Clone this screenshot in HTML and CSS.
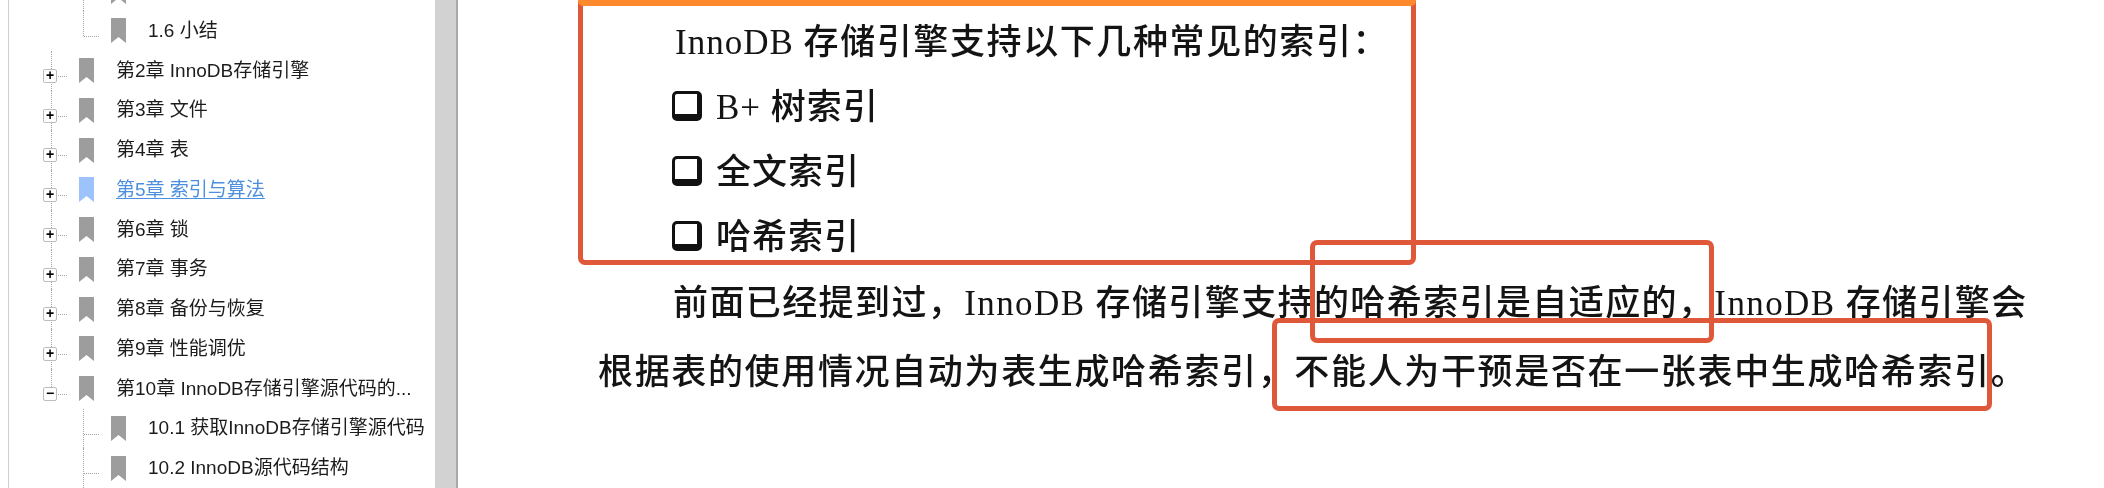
FILE: index.html
```html
<!DOCTYPE html>
<html lang="zh-CN">
<head>
<meta charset="utf-8">
<title>InnoDB 索引</title>
<link rel="stylesheet" href="styles.css">
</head>
<body>
<div class="app">
  <aside class="sidebar">
    <ul class="tree">
      <li class="row sub sub-line"><svg class="mark" viewBox="0 0 15 25"><path d="M0 0H15V25L7.5 19L0 25Z"/></svg><span class="label">1.5 各存储引擎之间的比较</span></li>
      <li class="row sub sub-line sub-end"><svg class="mark" viewBox="0 0 15 25"><path d="M0 0H15V25L7.5 19L0 25Z"/></svg><span class="label">1.6 小结</span></li>
      <li class="row top"><span class="toggle">+</span><svg class="mark" viewBox="0 0 15 25"><path d="M0 0H15V25L7.5 19L0 25Z"/></svg><span class="label">第2章 InnoDB存储引擎</span></li>
      <li class="row top"><span class="toggle">+</span><svg class="mark" viewBox="0 0 15 25"><path d="M0 0H15V25L7.5 19L0 25Z"/></svg><span class="label">第3章 文件</span></li>
      <li class="row top"><span class="toggle">+</span><svg class="mark" viewBox="0 0 15 25"><path d="M0 0H15V25L7.5 19L0 25Z"/></svg><span class="label">第4章 表</span></li>
      <li class="row top active"><span class="toggle">+</span><svg class="mark" viewBox="0 0 15 25"><path d="M0 0H15V25L7.5 19L0 25Z"/></svg><span class="label">第5章 索引与算法</span></li>
      <li class="row top"><span class="toggle">+</span><svg class="mark" viewBox="0 0 15 25"><path d="M0 0H15V25L7.5 19L0 25Z"/></svg><span class="label">第6章 锁</span></li>
      <li class="row top"><span class="toggle">+</span><svg class="mark" viewBox="0 0 15 25"><path d="M0 0H15V25L7.5 19L0 25Z"/></svg><span class="label">第7章 事务</span></li>
      <li class="row top"><span class="toggle">+</span><svg class="mark" viewBox="0 0 15 25"><path d="M0 0H15V25L7.5 19L0 25Z"/></svg><span class="label">第8章 备份与恢复</span></li>
      <li class="row top"><span class="toggle">+</span><svg class="mark" viewBox="0 0 15 25"><path d="M0 0H15V25L7.5 19L0 25Z"/></svg><span class="label">第9章 性能调优</span></li>
      <li class="row top top-end"><span class="toggle">&minus;</span><svg class="mark" viewBox="0 0 15 25"><path d="M0 0H15V25L7.5 19L0 25Z"/></svg><span class="label">第10章 InnoDB存储引擎源代码的...</span></li>
      <li class="row sub sub-line"><svg class="mark" viewBox="0 0 15 25"><path d="M0 0H15V25L7.5 19L0 25Z"/></svg><span class="label">10.1 获取InnoDB存储引擎源代码</span></li>
      <li class="row sub sub-line"><svg class="mark" viewBox="0 0 15 25"><path d="M0 0H15V25L7.5 19L0 25Z"/></svg><span class="label">10.2 InnoDB源代码结构</span></li>
    </ul>
  </aside>
  <div class="gutter"></div>
  <main class="page">
    <p class="line intro"><span class="latin">InnoDB </span>存储引擎支持以下几种常见的索引：</p>
    <p class="line item"><span class="check"></span>B+ 树索引</p>
    <p class="line item"><span class="check"></span>全文索引</p>
    <p class="line item"><span class="check"></span>哈希索引</p>
    <p class="line para-first">前面已经提到过，InnoDB 存储引擎支持的哈希索引是自适应的，InnoDB 存储引擎会</p>
    <p class="line para-last">根据表的使用情况自动为表生成哈希索引，不能人为干预是否在一张表中生成哈希索引。</p>
    <div class="note note-a"></div>
    <div class="note note-b"></div>
    <div class="note note-c"></div>
  </main>
</div>
</body>
</html>
```

FILE: styles.css
```css
* { box-sizing: border-box; }
html, body { margin: 0; height: 100%; background: #fff; overflow: hidden; }
.app { display: flex; height: 488px; width: 2104px; }

.sidebar {
  width: 427px;
  flex: none;
  margin-left: 8px;
  border-left: 1px solid #cfcfcf;
  overflow: hidden;
  background: #fff;
}
.tree {
  list-style: none;
  margin: -28.75px 0 0;
  padding: 0;
  font: 19px/24px "Liberation Sans", "Noto Sans CJK SC", sans-serif;
  color: #1c1c1c;
  filter: blur(0.25px);
}
.row {
  position: relative;
  display: flex;
  align-items: center;
  height: 39.75px;
  white-space: nowrap;
}
.top { padding-left: 70px; }
.sub { padding-left: 102px; }
.mark { width: 15px; height: 25px; flex: none; fill: #9d9d9d; }
.label { margin-left: 22px; }
.active .mark { fill: #9cc3fb; }
.active .label { color: #4c8fdf; text-decoration: underline; text-underline-offset: 2px; }

.top::before {
  content: "";
  position: absolute;
  left: 42px;
  top: 0;
  bottom: 0;
  border-left: 1px dotted #a3a3a3;
}
.top-end::before { bottom: 50%; }
.top::after {
  content: "";
  position: absolute;
  left: 49px;
  top: 25px;
  width: 9px;
  border-top: 1px dotted #a3a3a3;
}
.toggle {
  position: absolute;
  z-index: 1;
  left: 34px;
  top: 18px;
  width: 14px;
  height: 14px;
  border: 1px solid #bdbdbd;
  border-radius: 2px;
  background: #fff;
  color: #000;
  font: 700 14px/11px "Liberation Sans", sans-serif;
  text-align: center;
}
.sub-line::before {
  content: "";
  position: absolute;
  left: 74px;
  top: 0;
  bottom: 0;
  border-left: 1px dotted #a3a3a3;
}
.sub-end::before { bottom: 14.5px; }
.sub-line::after {
  content: "";
  position: absolute;
  left: 75px;
  top: 25px;
  width: 15px;
  border-top: 1px dotted #a3a3a3;
}

.gutter {
  width: 23px;
  flex: none;
  background: #d2d2d2;
  border-right: 2px solid #a9a9a9;
}
.page {
  position: relative;
  flex: 1;
  padding-top: 18px;
  font-family: "Liberation Serif", "Noto Sans CJK SC", serif;
  font-size: 35px;
  font-weight: 500;
  color: #141414;
}
.line {
  margin: 0;
  height: 65px;
  line-height: 50px;
  white-space: nowrap;
  filter: blur(0.45px);
}
.intro { padding-left: 217px; letter-spacing: 1.6px; }
.latin { letter-spacing: 1px; }
.item { display: flex; align-items: flex-start; padding-left: 214px; letter-spacing: 1px; }
.check {
  flex: none;
  width: 30px;
  height: 30px;
  margin: 8px 14px 0 0;
  border: 3px solid #111;
  border-right-width: 5px;
  border-bottom-width: 7px;
  border-radius: 5px;
}
.para-first { padding-left: 215px; letter-spacing: 1.4px; margin-top: 1px; }
.para-last { padding-left: 140px; letter-spacing: 1.65px; margin-top: 4px; }

.note {
  position: absolute;
  border: 5px solid #e0583a;
  border-radius: 7px;
}
.note-a { left: 120px; top: -8px; width: 838px; height: 273px; }
.note-a::before {
  content: "";
  position: absolute;
  left: -5px;
  right: -5px;
  top: -5px;
  height: 14px;
  background: #ff8a2e;
  border-radius: 0 0 5px 5px;
}
.note-b { left: 852px; top: 240px; width: 404px; height: 103px; }
.note-c { left: 814px; top: 318px; width: 720px; height: 93px; }
```
